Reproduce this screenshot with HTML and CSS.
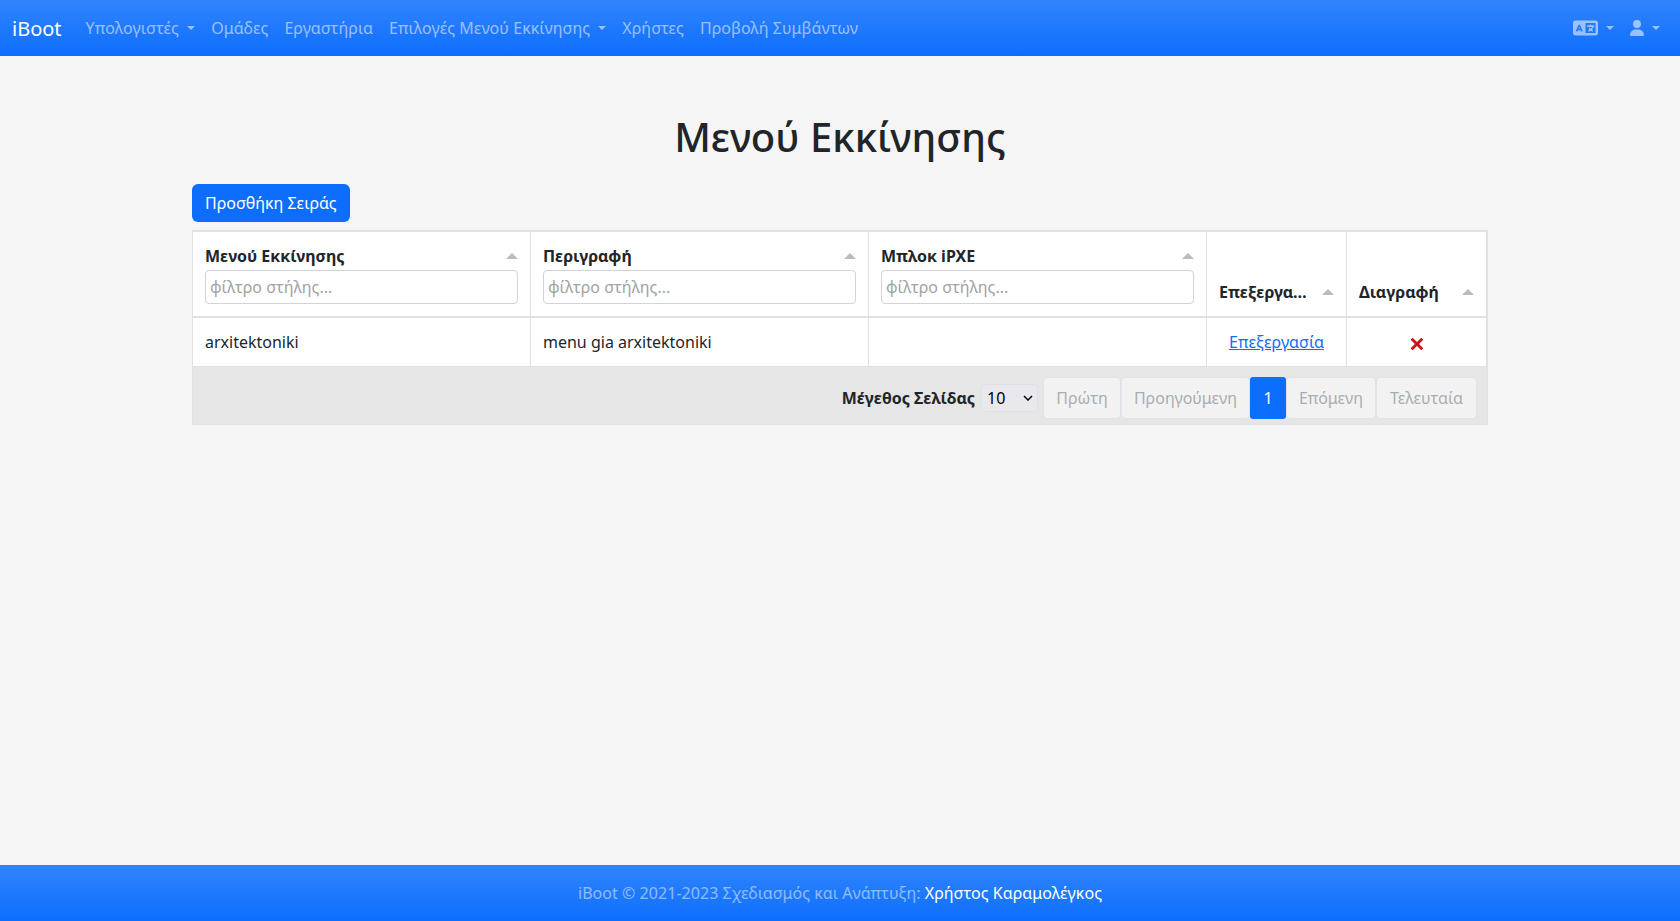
FILE: index.html
```html
<!DOCTYPE html>
<html lang="el">
<head>
<meta charset="utf-8">
<title>iBoot</title>
<link rel="stylesheet" href="styles.css">
</head>
<body>
<nav class="navbar">
  <a class="brand" href="#">iBoot</a>
  <div class="nav-links">
    <a class="nav-link caret first" href="#">Υπολογιστές </a>
    <a class="nav-link" href="#">Ομάδες</a>
    <a class="nav-link" href="#">Εργαστήρια</a>
    <a class="nav-link caret" href="#">Επιλογές Μενού Εκκίνησης </a>
    <a class="nav-link" href="#">Χρήστες</a>
    <a class="nav-link" href="#">Προβολή Συμβάντων</a>
  </div>
  <div class="nav-links nav-end">
    <a class="nav-link caret" href="#" aria-label="Γλώσσα"><svg class="icon-language" viewBox="0 0 640 512"><path d="M0 128C0 92.7 28.7 64 64 64H256h48 16H576c35.3 0 64 28.7 64 64V384c0 35.3-28.7 64-64 64H320 304 256 64c-35.3 0-64-28.7-64-64V128zm320 0V384H576V128H320zM178.3 175.9c-3.2-7.2-10.4-11.9-18.3-11.9s-15.1 4.7-18.3 11.9l-64 144c-4.5 10.1 .1 21.9 10.2 26.4s21.9-.1 26.4-10.2l8.9-20.1h73.6l8.9 20.1c4.5 10.1 16.3 14.6 26.4 10.2s14.6-16.3 10.2-26.4l-64-144zM160 233.2L179 276H141l19-42.8zM448 164c11 0 20 9 20 20v4h44 16c11 0 20 9 20 20s-9 20-20 20h-2l-1.6 4.5c-8.9 24.4-22.4 46.6-39.6 65.4c.9 .6 1.8 1.1 2.7 1.6l18.9 11.3c9.5 5.7 12.5 18 6.9 27.4s-18 12.5-27.4 6.9l-18.9-11.3c-4.5-2.7-8.8-5.5-13.1-8.5c-10.6 7.5-21.9 14-34 19.4l-3.6 1.6c-10.1 4.5-21.9-.1-26.4-10.2s.1-21.9 10.2-26.4l3.6-1.6c6.4-2.9 12.6-6.1 18.5-9.8l-12.2-12.2c-7.8-7.8-7.8-20.5 0-28.3s20.5-7.8 28.3 0l14.6 14.6 .5 .5c12.4-13.1 22.5-28.3 29.8-45H448 376c-11 0-20-9-20-20s9-20 20-20h52v-4c0-11 9-20 20-20z"/></svg> </a>
    <a class="nav-link caret" href="#" aria-label="Χρήστης"><svg class="icon-user" viewBox="0 0 448 512"><path d="M224 256A128 128 0 1 0 224 0a128 128 0 1 0 0 256zm-45.7 48C79.8 304 0 383.8 0 482.3C0 498.7 13.3 512 29.7 512H418.3c16.4 0 29.7-13.3 29.7-29.7C448 383.8 368.2 304 269.7 304H178.3z"/></svg> </a>
  </div>
</nav>

<main class="container">
  <h1 class="page-title">Μενού Εκκίνησης</h1>
  <button class="btn-add">Προσθήκη Σειράς</button>
  <div class="table">
    <div class="row header">
      <div class="cell"><div class="title"><span>Μενού Εκκίνησης</span><i class="arrow"></i></div><input class="filter" placeholder="φίλτρο στήλης..."></div>
      <div class="cell"><div class="title"><span>Περιγραφή</span><i class="arrow"></i></div><input class="filter" placeholder="φίλτρο στήλης..."></div>
      <div class="cell"><div class="title"><span>Μπλοκ iPXE</span><i class="arrow"></i></div><input class="filter" placeholder="φίλτρο στήλης..."></div>
      <div class="cell"><div class="title"><span>Επεξεργα…</span><i class="arrow"></i></div></div>
      <div class="cell"><div class="title"><span>Διαγραφή</span><i class="arrow"></i></div></div>
    </div>
    <div class="row data">
      <div class="cell">arxitektoniki</div>
      <div class="cell">menu gia arxitektoniki</div>
      <div class="cell"></div>
      <div class="cell center"><a class="edit" href="#">Επεξεργασία</a></div>
      <div class="cell center"><svg class="cross" viewBox="0 0 24 24"><path d="M22.245,4.015c0.313,0.313,0.313,0.826,0,1.139l-6.276,6.27c-0.313,0.312-0.313,0.826,0,1.14l6.273,6.272c0.313,0.313,0.313,0.826,0,1.14l-2.285,2.277c-0.314,0.312-0.828,0.312-1.142,0l-6.271-6.271c-0.313-0.313-0.828-0.313-1.141,0l-6.276,6.267c-0.313,0.313-0.828,0.313-1.141,0l-2.282-2.28c-0.313-0.313-0.313-0.826,0-1.14l6.278-6.269c0.313-0.312,0.313-0.826,0-1.14L1.709,5.147c-0.314-0.313-0.314-0.827,0-1.14l2.284-2.278C4.308,1.417,4.821,1.417,5.135,1.73L11.405,8c0.314,0.314,0.828,0.314,1.141,0.001l6.276-6.267c0.312-0.312,0.826-0.312,1.141,0L22.245,4.015z"/></svg></div>
    </div>
    <div class="paginator">
      <label class="size-label" for="size">Μέγεθος Σελίδας</label>
      <div class="size-wrap">
        <select class="size" id="size"><option>10</option></select>
        <svg class="chevron" viewBox="0 0 10 6"><path d="M1 1l4 4 4-4"/></svg>
      </div>
      <div class="pages">
        <button class="page" disabled>Πρώτη</button>
        <button class="page" disabled>Προηγούμενη</button>
        <button class="page active">1</button>
        <button class="page" disabled>Επόμενη</button>
        <button class="page" disabled>Τελευταία</button>
      </div>
    </div>
  </div>
</main>

<footer class="footer"><span>iBoot © 2021-2023 Σχεδιασμός και Ανάπτυξη: <a class="author" href="#">Χρήστος Καραμολέγκος</a></span></footer>
</body>
</html>
```
FILE: styles.css
```css
*, *::before, *::after { box-sizing: border-box; }
body {
  margin: 0;
  min-height: 100vh;
  display: flex;
  flex-direction: column;
  background: #f5f5f5;
  color: #212529;
  font: 16px/24px "Noto Sans", sans-serif;
}
button, input, select { font: inherit; margin: 0; }
.navbar, .footer {
  height: 56px;
  display: flex;
  align-items: center;
  background: linear-gradient(180deg, #3184fd, #0d6efd);
}
.navbar { padding: 0 12px; }
.brand {
  margin-right: 16px;
  padding-top: 1px;
  font-size: 20px;
  line-height: 30px;
  color: #fff;
  text-decoration: none;
}
.nav-links { display: flex; align-items: center; }
.nav-end { margin-left: auto; }
.nav-link {
  padding: 8px;
  color: rgba(255, 255, 255, .55);
  text-decoration: none;
  white-space: pre;
  letter-spacing: .06px;
}
.nav-link.first { letter-spacing: .13px; }
.caret::after {
  content: "";
  display: inline-block;
  margin-left: 4px;
  vertical-align: 4px;
  border-top: 4.8px solid;
  border-left: 4.8px solid transparent;
  border-right: 4.8px solid transparent;
}
.icon-language { width: 25px; height: 20px; vertical-align: -4px; fill: currentColor; }
.icon-user { width: 14px; height: 16px; vertical-align: -2px; fill: currentColor; }

.container {
  flex: 1;
  width: 1320px;
  margin: 0 auto;
  padding: 57px 12px 0;
}
.page-title {
  margin: 0 0 23px;
  text-align: center;
  font-size: 40px;
  line-height: 48px;
  font-weight: 500;
}
.btn-add {
  display: block;
  height: 38px;
  padding: 0 13px;
  margin-bottom: 8px;
  border: 0;
  border-radius: 6px;
  background: #0d6efd;
  color: #fff;
}
.table {
  border: 1px solid #dee2e6;
  border-top-width: 2px;
  background: #fff;
}
.row { display: grid; grid-template-columns: 338px 338px 338px 140px 140px; }
.cell { min-width: 0; padding: 12px; border-right: 1px solid #dee2e6; }
.header { height: 86px; border-bottom: 2px solid #dee2e6; font-weight: 700; }
.header .cell { display: flex; flex-direction: column; justify-content: flex-end; }
.title { display: flex; align-items: center; justify-content: space-between; }
.title span { white-space: nowrap; }
.arrow {
  flex: none;
  border-left: 6px solid transparent;
  border-right: 6px solid transparent;
  border-bottom: 6px solid #bbb;
}
.filter {
  width: 100%;
  height: 34px;
  margin-top: 2px;
  padding: 4px;
  border: 1px solid #ced4da;
  border-radius: 4px;
  background: #fff;
}
.filter::placeholder { color: #a0a2a4; font-weight: 400; }
.data { height: 49px; border-bottom: 1px solid #dee2e6; }
.center { text-align: center; }
.edit { color: #0d6efd; letter-spacing: .08px; }
.cross { width: 14px; height: 14px; fill: #ce1515; vertical-align: -3px; }
.paginator {
  height: 57px;
  display: flex;
  align-items: center;
  justify-content: flex-end;
  padding: 5px 10px 0;
  background: #e6e6e6;
}
.size-label { font-weight: 700; }
.size-wrap { position: relative; margin: 0 5px 0 6px; height: 28px; }
.size {
  appearance: none;
  width: 57px;
  height: 28px;
  padding: 0 5px;
  border: 1px solid #dee2e6;
  border-radius: 4px;
  background: #e9e9ed;
  color: #000;
}
.chevron {
  position: absolute;
  right: 5px;
  top: 11px;
  width: 10px;
  height: 6px;
  fill: none;
  stroke: #000;
  stroke-width: 1.5;
}
.pages { display: grid; grid-template-columns: 78px 129px 36px 90px 101px; }
.page {
  height: 42px;
  padding: 0;
  border: 1px solid #dee2e6;
  border-radius: 4px;
  background: #fff;
  background-clip: padding-box;
  color: #6c757d;
}
.page:disabled { opacity: .5; }
.page.active { border: 0; border-radius: 3px; background: #0d6efd; color: #fff; }
.footer { justify-content: center; color: rgba(255, 255, 255, .5); letter-spacing: .04px; }
.author { color: #fff; text-decoration: none; }
```
